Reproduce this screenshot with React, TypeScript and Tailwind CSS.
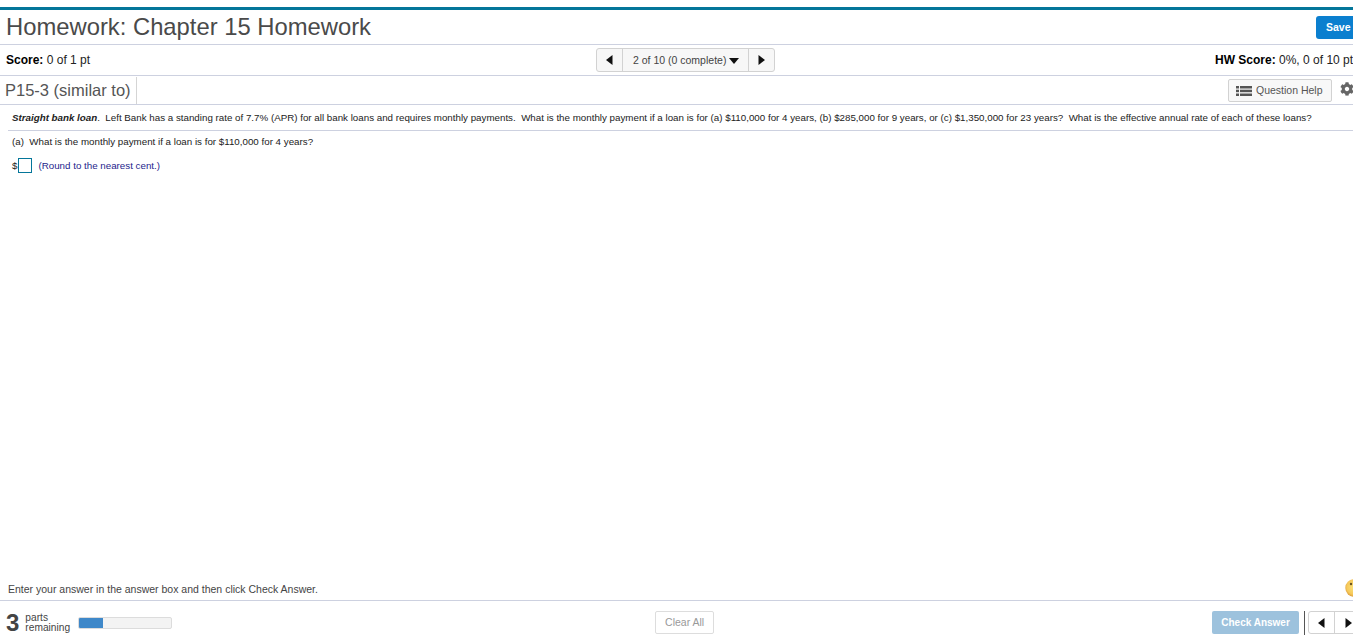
import { FaCog } from 'react-icons/fa'

const LeftArrow = () => (
  <svg width="7" height="10" viewBox="0 0 7 10"><path d="M6.5 0v10L0 5z" fill="#111" /></svg>
)

const RightArrow = () => (
  <svg width="7" height="10" viewBox="0 0 7 10"><path d="M.5 0v10L7 5z" fill="#111" /></svg>
)

const ListIcon = () => (
  <svg width="16" height="10" viewBox="0 0 16 10" fill="#555">
    <rect x="0" y="0" width="3" height="2.5" />
    <rect x="4" y="0" width="12" height="2.5" />
    <rect x="0" y="3.7" width="3" height="2.5" />
    <rect x="4" y="3.7" width="12" height="2.5" />
    <rect x="0" y="7.5" width="3" height="2.5" />
    <rect x="4" y="7.5" width="12" height="2.5" />
  </svg>
)

const Smiley = () => (
  <svg width="18" height="18" viewBox="0 0 18 18" className="ml-auto mr-[-1px] mt-[-4px]">
    <defs>
      <radialGradient id="face" cx="50%" cy="45%" r="55%">
        <stop offset="0%" stopColor="#fbe27a" />
        <stop offset="75%" stopColor="#f6c95a" />
        <stop offset="100%" stopColor="#dd9f3c" />
      </radialGradient>
    </defs>
    <circle cx="9" cy="9" r="8.7" fill="url(#face)" />
    <circle cx="6" cy="5" r="1.2" fill="#6a5220" />
    <circle cx="12" cy="5" r="1.2" fill="#6a5220" />
  </svg>
)

export default function App() {
  return (
    <div className="h-[642px] w-[1353px] overflow-hidden bg-white font-['Liberation_Sans',Arial,sans-serif]">
      <div className="flex h-full w-[1362px] flex-col pt-[7px]">
        {/* title bar */}
        <div className="flex h-[38px] shrink-0 items-center justify-between border-t-[3px] border-b border-t-[#04769a] border-b-[#cdd1e0] pl-[6px] pr-[2px]">
          <h1 className="text-[23.8px] leading-none text-[#4a4a4a]">Homework: Chapter 15 Homework</h1>
          <button className="flex h-[23px] w-[44px] items-center rounded-[3px] bg-[#0b7fcf] pl-[10px] pt-[1px] text-[10.5px] font-bold text-white">Save</button>
        </div>

        {/* score row */}
        <div className="flex h-[31px] shrink-0 items-center border-b border-[#cdd1e0] pl-[6px] pr-[3px] text-[12px] text-[#222]">
          <div className="w-[300px]"><b className="text-black">Score:</b> 0 of 1 pt</div>
          <div className="ml-[290px] flex h-[24px] items-stretch rounded-[3px] border border-[#d2d2d2] bg-[#f7f7f7]">
            <div className="flex w-[26px] items-center justify-center border-r border-[#d2d2d2]"><LeftArrow /></div>
            <div className="flex w-[125px] items-center gap-[3px] pl-[10px] pt-[1px] text-[10.5px] text-[#444]">
              2 of 10 (0 complete)
              <svg width="10" height="6" viewBox="0 0 10 6"><path d="M0 0h10L5 6z" fill="#111" /></svg>
            </div>
            <div className="flex w-[26px] items-center justify-center border-l border-[#d2d2d2]"><RightArrow /></div>
          </div>
          <div className="ml-auto w-[144px] whitespace-nowrap"><b className="text-black">HW Score:</b> 0%, 0 of 10 pts</div>
        </div>

        {/* question title row */}
        <div className="flex h-[29px] shrink-0 items-center border-b border-[#cdd1e0] pl-[5px]">
          <div className="flex h-[27px] items-center border-r border-[#d5d5d5] pr-[5px] text-[16.5px] text-[#555]">P15-3 (similar to)</div>
          <button className="ml-auto flex h-[23px] w-[104px] items-center gap-[4px] rounded-[2px] border border-[#d2d2d2] bg-[#f8f8f8] pl-[7px] pt-[1px] text-[10.5px] text-[#555]">
            <ListIcon />
            Question Help
          </button>
          <FaCog className="ml-[8px] mr-[8px] mt-[-2px] h-[14px] w-[14px] text-[#666]" />
        </div>

        {/* question */}
        <div className="flex-1 pl-[8px] text-[9.77px] text-[#222]">
          <p className="flex h-[26px] items-center whitespace-pre border-b border-[#cdd1e0] pl-[4px] pt-[2px]">
            <b><i>Straight bank loan</i></b>.  Left Bank has a standing rate of 7.7% (APR) for all bank loans and requires monthly payments.  What is the monthly payment if a loan is for (a) $110,000 for 4 years, (b) $285,000 for 9 years, or (c) $1,350,000 for 23 years?  What is the effective annual rate of each of these loans?
          </p>
          <p className="mt-[5px] whitespace-pre pl-[4px] leading-[12px]">(a)  What is the monthly payment if a loan is for $110,000 for 4 years?</p>
          <div className="mt-[10px] flex items-center pl-[4px]">
            <span>$</span>
            <span className="ml-[1px] h-[15px] w-[14px] border border-[#04769a]" />
            <span className="ml-[6px] pt-[1px] text-[#1e1e8c]">(Round to the nearest cent.)</span>
          </div>
        </div>

        {/* instruction row */}
        <div className="flex h-[28px] shrink-0 items-center border-b border-[#cdd1e0] pl-[8px] pt-[6px] text-[10.5px] text-[#444]">
          Enter your answer in the answer box and then click Check Answer.
          <Smiley />
        </div>

        {/* footer */}
        <div className="flex h-[41px] shrink-0 items-center pl-[6px] pt-[2px]">
          <span className="text-[24px] font-bold leading-none text-[#444]">3</span>
          <span className="ml-[6px] w-[47px] text-[10.2px] leading-[10px] text-[#444]">parts<br />remaining</span>
          <div className="ml-[6px] h-[12px] w-[94px] overflow-hidden rounded-[2px] border border-[#dcdcdc] bg-[#f3f3f3]">
            <div className="h-full w-[24px] bg-[#3f88c9]" />
          </div>
          <button className="ml-[483px] flex h-[23px] w-[59px] items-center justify-center rounded-[2px] border border-[#ddd] bg-white text-[10.5px] text-[#999]">Clear All</button>
          <button className="ml-[498px] flex h-[23px] w-[87px] items-center justify-center rounded-[2px] bg-[#9dc2dd] text-[10px] font-bold text-white">Check Answer</button>
          <span className="ml-[5px] h-[24px] w-px bg-[#555]" />
          <div className="ml-[3px] flex h-[23px] items-stretch rounded-[3px] border border-[#d2d2d2]">
            <div className="flex w-[26px] items-center justify-center border-r border-[#d2d2d2]"><LeftArrow /></div>
            <div className="flex w-[26px] items-center justify-center"><RightArrow /></div>
          </div>
        </div>
      </div>
    </div>
  )
}
